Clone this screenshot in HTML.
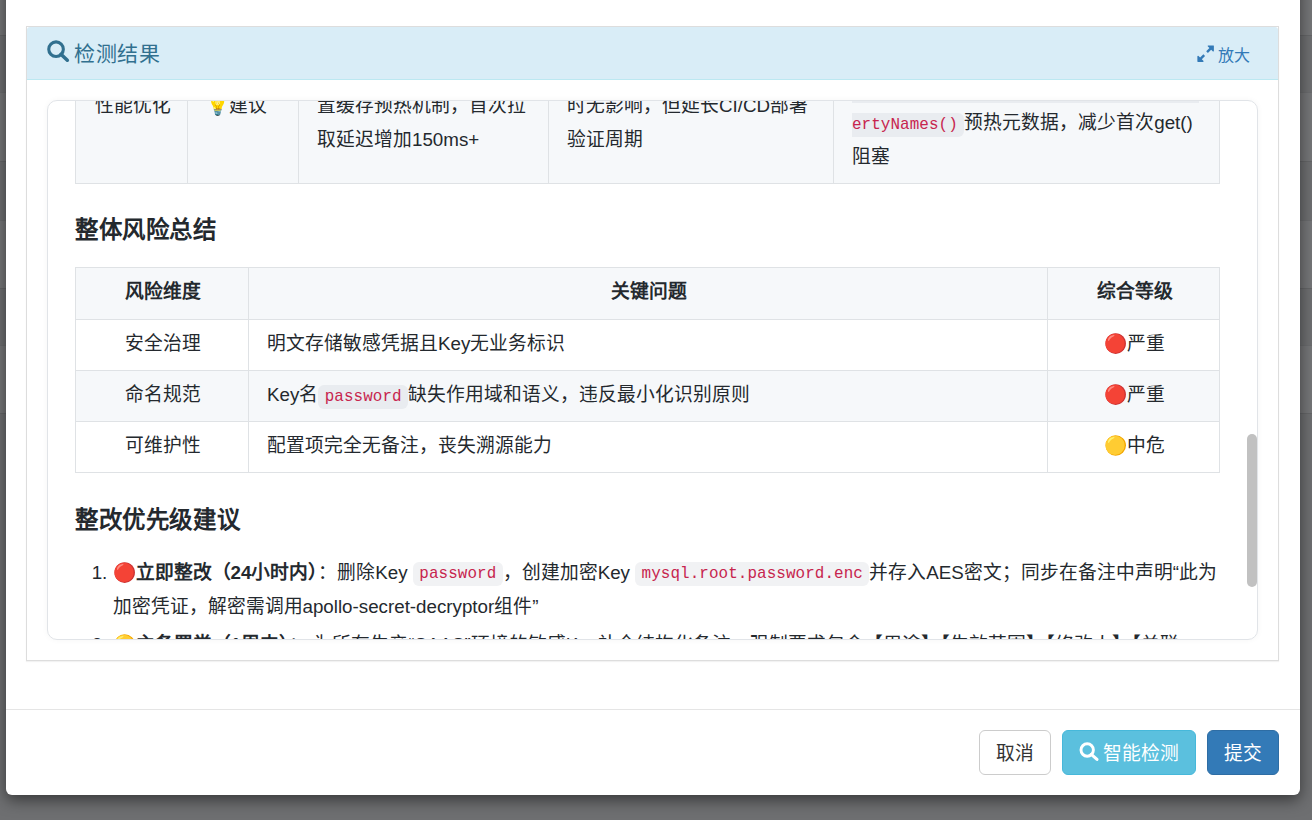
<!DOCTYPE html>
<html lang="zh-CN"><head><meta charset="utf-8">
<style>
*{box-sizing:border-box}
html,body{margin:0;padding:0;width:1312px;height:820px;overflow:hidden}
body{background:#6e6f71;font-family:"Liberation Sans",sans-serif;color:#333;position:relative}
.stripe{position:absolute;left:0;width:1312px;background:#666}
.modal{position:absolute;left:6px;top:-40px;width:1294px;height:835px;background:#fff;border-radius:6px;box-shadow:0 5px 15px rgba(0,0,0,.5)}
.panel{position:absolute;left:20px;top:66px;width:1253px;height:635px;border:1px solid #ddd;box-shadow:0 1px 1px rgba(0,0,0,.05)}
.ph{position:absolute;left:0;top:0;width:1251px;height:53px;background:#d9edf7;border-bottom:1px solid #bce8f1;border-radius:3px 3px 0 0;color:#31708f}
.ph .t{position:absolute;left:47px;top:12.5px;font-size:21px;line-height:28px;letter-spacing:0.6px}
.ph .zoom{position:absolute;right:28px;top:18px;font-size:16px;line-height:22px;color:#337ab7}
.box{position:absolute;left:20px;top:73px;width:1211px;height:540px;border:1px solid #e1e4e8;border-radius:10px;overflow:hidden;box-shadow:0 0 6px rgba(0,0,0,.04)}
.md{position:absolute;left:27px;top:0;width:1145px;font-size:18.75px;line-height:1.8;color:#24292e}
.md table{border-collapse:collapse;border-spacing:0;width:1145px}
.md td,.md th{border:1px solid #dfe2e5;padding:7px 16px 9px 18px;line-height:34px}
.md th{padding-bottom:10px}
.md tbody tr:nth-child(2n){background:#f6f8fa}
.md th{font-weight:700;background:#f6f8fa}
.md code{position:relative;top:-1px;letter-spacing:0.07px;line-height:1;font-family:"Liberation Mono",monospace;font-size:85%;color:#c7254e;background:rgba(175,184,193,.18);padding:.2em .4em;border-radius:6px}
.md td code{top:0}
.md h3{letter-spacing:0.6px;font-size:23.4375px;line-height:30px;margin:31px 0 22px;font-weight:700}
.md ol{margin:-1px 0 0;padding-left:37.5px}
.md li{line-height:34px}
.md li+li{margin-top:4px}
.thumb{position:absolute;left:1199px;top:333px;width:10px;height:153px;border-radius:5px;background:#c1c1c1}
.footer{position:absolute;left:0;top:749px;width:1294px;border-top:1px solid #e5e5e5;height:86px}
.btn{position:absolute;top:20px;height:45px;border-radius:6px;font-size:18.75px;line-height:45px;text-align:center;border:1px solid transparent}
.b1{left:973px;width:72px;background:#fff;border-color:#ccc;color:#333}
.b2{left:1056px;width:134px;background:#5bc0de;border-color:#46b8da;color:#fff}
.b3{left:1201px;width:72px;background:#337ab7;border-color:#2e6da4;color:#fff}
</style></head><body>
<div class="stripe" style="top:0px;height:35px;background:rgba(255,255,255,.05)"></div><div class="stripe" style="top:92px;height:69px;background:rgba(255,255,255,.05)"></div><div class="stripe" style="top:220px;height:68px;background:rgba(255,255,255,.05)"></div><div class="stripe" style="top:345px;height:68px;background:rgba(255,255,255,.05)"></div><div class="stripe" style="top:35px;height:1px;background:rgba(0,0,0,.08)"></div><div class="stripe" style="top:92px;height:1px;background:rgba(0,0,0,.08)"></div><div class="stripe" style="top:161px;height:1px;background:rgba(0,0,0,.08)"></div><div class="stripe" style="top:220px;height:1px;background:rgba(0,0,0,.08)"></div><div class="stripe" style="top:288px;height:1px;background:rgba(0,0,0,.08)"></div><div class="stripe" style="top:345px;height:1px;background:rgba(0,0,0,.08)"></div><div class="stripe" style="top:413px;height:1px;background:rgba(0,0,0,.08)"></div>
<div class="modal">
  <div class="panel">
    <div class="ph">
      <svg style="position:absolute;left:17px;top:11px" width="28" height="26" viewBox="0 0 28 26"><circle cx="12.05" cy="11.2" r="7.3" fill="none" stroke="#31708f" stroke-width="3.1"/><line x1="17" y1="16.3" x2="23.3" y2="22.2" stroke="#31708f" stroke-width="3.6" stroke-linecap="round"/></svg><div class="t">检测结果</div>
      <svg style="position:absolute;left:1169px;top:17px" width="19.25" height="19.25" viewBox="0 0 1792 1792"><path fill="#337ab7" d="M833 1106q0 13-10 23l-282 282 144 144q19 19 19 45t-19 45-45 19h-448q-26 0-45-19t-19-45v-448q0-26 19-45t45-19 45 19l144 144 282-282q10-10 23-10t23 10l114 114q10 10 10 23zm831-914v448q0 26-19 45t-45 19-45-19l-144-144-282 282q-10 10-23 10t-23-10l-114-114q-10-10-10-23t10-23l282-282-144-144q-19-19-19-45t19-45 45-19h448q26 0 45 19t19 45z"/></svg><div class="zoom">放大</div>
    </div>
    <div class="box">
      <div class="md" id="md">
<table class="t1" style="margin-top:-71px">
<tr style="background:#f6f8fa">
<td style="width:112px;text-align:center">性能优化</td>
<td style="width:111px">💡建议</td>
<td style="width:250px">未配置缓存预热<br>置缓存预热机制，首次拉<br>取延迟增加150ms+</td>
<td style="width:285px">对现网服务运行<br>时无影响，但延长CI/CD部署<br>验证周期</td>
<td>建议启动时调用<code>Apollo<br>ConfigService.getAppConfig().getProp<br>ertyNames()</code>预热元数据，减少首次get()<br>阻塞</td>
</tr>
</table>
<h3>整体风险总结</h3>
<table class="t2">
<thead><tr><th style="width:173px">风险维度</th><th>关键问题</th><th style="width:172px">综合等级</th></tr></thead><tbody>
<tr><td style="text-align:center">安全治理</td><td>明文存储敏感凭据且Key无业务标识</td><td style="text-align:center">🔴严重</td></tr>
<tr><td style="text-align:center">命名规范</td><td>Key名<code>password</code>缺失作用域和语义，违反最小化识别原则</td><td style="text-align:center">🔴严重</td></tr>
<tr><td style="text-align:center">可维护性</td><td>配置项完全无备注，丧失溯源能力</td><td style="text-align:center">🟡中危</td></tr></tbody>
</table>
<h3 style="margin-top:32px">整改优先级建议</h3>
<ol>
<li>🔴<strong>立即整改（24小时内）</strong>：删除Key <code>password</code>，创建加密Key <code>mysql.root.password.enc</code>并存入AES密文；同步在备注中声明“此为加密凭证，解密需调用apollo-secret-decryptor组件”</li>
<li>🟡<strong>主备署常（1周内）</strong>： 为所有生产“SAAS”环境的敏感Key补全结构化备注，强制要求包含【用途】【生效范围】【修改人】【关联Commit】</li>
</ol>
</div>
      <div class="thumb"></div>
    </div>
  </div>
  <div class="footer">
    <div class="btn b1">取消</div>
    <div class="btn b2"><svg style="position:absolute;left:9px;top:6px" width="28" height="28" viewBox="0 0 28 28"><circle cx="15.2" cy="13" r="6.2" fill="none" stroke="#fff" stroke-width="2.9"/><line x1="19.3" y1="17.3" x2="25" y2="22.4" stroke="#fff" stroke-width="3.1" stroke-linecap="round"/></svg><span style="position:absolute;left:40px;top:0">智能检测</span></div>
    <div class="btn b3">提交</div>
  </div>
</div>
</body></html>
